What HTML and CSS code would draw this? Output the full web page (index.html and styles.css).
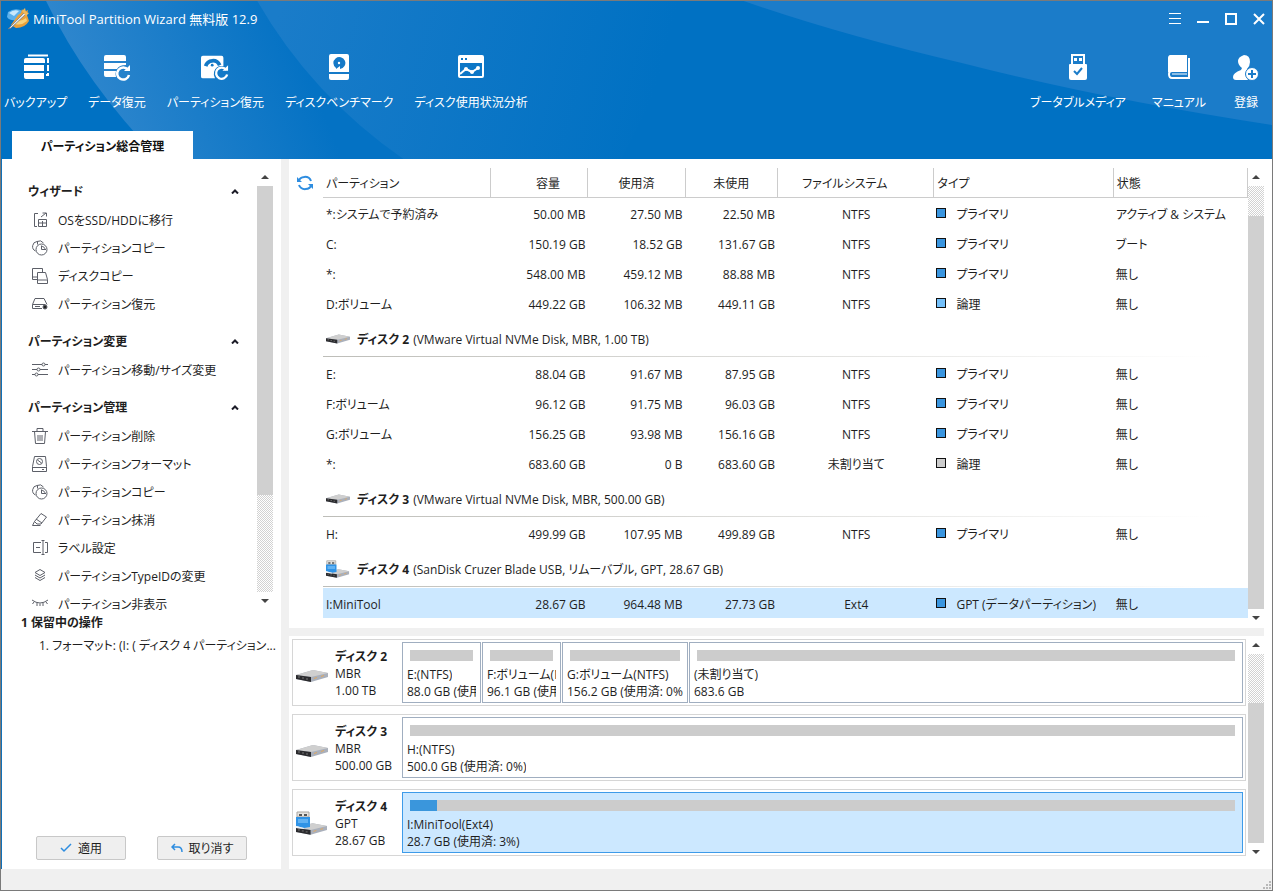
FILE: index.html
```html
<!DOCTYPE html>
<html lang="ja">
<head>
<meta charset="utf-8">
<meta name="viewport" content="width=device-width, initial-scale=1">
<title>MiniTool Partition Wizard 無料版 12.9</title>
<link rel="stylesheet" href="styles.css">
</head>
<body>
<svg class="defs" aria-hidden="true">
  <defs>
    <symbol id="disk" viewBox="0 0 32 12">
      <path d="M0 5 17 0 32 3 32 7 15 12 0 9z" fill="#aab0bb"/>
      <path d="M0 5 17 0 32 3 15 7z" fill="#cfcfcf"/>
      <path d="M0 5 15 7 15 12 0 9z" fill="#2b2b2e"/>
      <path d="M2 7h2M6 8h2M10 9h2" stroke="#777" stroke-width="1"/>
      <path d="M18 8.500l3-1M25 6.500l3-1" stroke="#e0a860" stroke-width="1"/>
    </symbol>
    <symbol id="usb" viewBox="0 0 32 24">
      <use href="#disk" x="0" y="12" width="31" height="12"/>
      <path d="M1 1h12v5H1z" fill="#e6e4e0" stroke="#a9a5a0"/>
      <path d="M3 3h3v2H3zM8 3h3v2H8z" fill="#555"/>
      <path d="M0 6h14v10l-6 1-8-2z" fill="#2f93e6"/>
      <path d="M2 8h10v4H2z" fill="#62b2f2"/>
      <path d="M0 15 8 17v1l-8-1z" fill="#eef3f8"/>
    </symbol>
    <symbol id="pie" viewBox="0 0 16 16">
      <circle cx="9.500" cy="9.500" r="5.500"/><path d="M3.500 11A5 5 0 0 1 5 1.500q4-2 6.500 1.500M5.500 1.500v3M9.500 5.500v4H14M9.500 6.500a3 3 0 0 1 3.500 3"/>
    </symbol>
    <symbol id="up" viewBox="0 0 8 4"><path d="M0 4 4 0 8 4z" fill="#444"/></symbol>
    <symbol id="down" viewBox="0 0 8 4"><path d="M0 0h8L4 4z" fill="#444"/></symbol>
    <symbol id="chev" viewBox="0 0 8 5"><path d="M1 4.500 4 1.500 7 4.500" fill="none" stroke="#1c1c28" stroke-width="2"/></symbol>
  </defs>
</svg>
<div class="window">
  <header class="header">
    <svg class="backdrop" viewBox="0 0 1270 158" preserveAspectRatio="none" aria-hidden="true">
      <defs>
        <linearGradient id="beam1" gradientUnits="userSpaceOnUse" x1="70" y1="60" x2="270" y2="-20"><stop offset="0" stop-color="#2e86cd"/><stop offset="1" stop-color="#0472c4"/></linearGradient>
        <linearGradient id="beam2" gradientUnits="userSpaceOnUse" x1="270" y1="40" x2="640" y2="140"><stop offset="0" stop-color="#1a7cc9"/><stop offset="1" stop-color="#0071c3"/></linearGradient>
      </defs>
      <path d="M45 0H256Q310 94 402 158H158Q84 82 45 0z" fill="url(#beam1)"/>
      <path d="M256 0H700L620 158H402Q310 94 256 0z" fill="url(#beam2)"/>
      <path d="M742 0Q840 34 960 62 1100 98 1270 124V0z" fill="#1b7cc9"/>
    </svg>
    <div class="titlebar">
      <svg class="logo" viewBox="0 0 22 22" aria-hidden="true">
        <path d="M1 4Q8-1 16 3L9 12Q3 13 0 9z" fill="#5cb1ec"/><path d="M2 5Q7 1 12 3L7 8z" fill="#c9e8fb"/>
        <path d="M11 7 14 5 15 1l2 3 4-2-1 5 2 6q-4 7-13 7l-5-3z" fill="#e9a13b"/><path d="M9 12q5 2 10-2l1 3q-6 5-12 3z" fill="#f8d27a"/>
        <path d="M1 21 17 5l2 1L4 20z" fill="#e9edf2" stroke="#6a7480" stroke-width=".7"/><path d="m15 3 3-3 1 4 3 1-3 3z" fill="#f0b95a"/>
      </svg>
      <h1 class="title">MiniTool Partition Wizard 無料版 12.9</h1>
      <div class="controls">
        <button aria-label="メニュー"><svg viewBox="0 0 12 12"><path d="M0 .5h12M0 5.500h12M0 10.500h12" stroke="#fff" fill="none"/></svg></button>
        <button aria-label="最小化"><svg viewBox="0 0 12 12"><path d="M0 9h12" stroke="#fff" stroke-width="2"/></svg></button>
        <button aria-label="最大化"><svg viewBox="0 0 12 12"><path d="M1 1h10v10H1z" stroke="#fff" stroke-width="2" fill="none"/></svg></button>
        <button aria-label="閉じる"><svg viewBox="0 0 12 12"><path d="m1 1 10 10M11 1 1 11" stroke="#fff" stroke-width="2"/></svg></button>
      </div>
    </div>
    <nav class="toolbar">
      <div class="tools">
      <button class="tool"><svg viewBox="0 0 26 28"><path d="M5 1.500h20M25 4v5M25 11v6M25 19v2h-2" fill="none" stroke="#fff" stroke-width="2"/><path d="M1 6q0-2 2-2h17q2 0 2 2v3H1zM1 11h20v6H1zM1 19h20v6H3q-2 0-2-2z" fill="#fff"/></svg><span>バックアップ</span></button>
      <button class="tool"><svg viewBox="0 0 26 28"><path d="M0 3q0-2 2-2h18q2 0 2 2v4H0zM0 9h22v2q-7 0-9 4H0zM0 17h12q-1 3 0 6H2q-2 0-2-2z" fill="#fff"/><path d="M24 16a6 6 0 1 0 1 5" fill="none" stroke="#fff" stroke-width="2.500"/><path d="M20 17h6v-6z" fill="#fff"/></svg><span>データ復元</span></button>
      <button class="tool"><svg viewBox="0 0 30 28"><path d="M0 3q0-2 2-2h20q2 0 2 2v9q-8-1-10 6-1 4 1 7H2q-2 0-2-2z" fill="#fff"/><path d="M5 12A8 8 0 0 1 20 11" fill="none" stroke="#1378c6" stroke-width="4"/><circle cx="12" cy="11" r="1.500" fill="#1378c6"/><path d="M27 16a6 6 0 1 0 1 5" fill="none" stroke="#fff" stroke-width="2.500"/><path d="M23 17h6v-6z" fill="#fff"/></svg><span>パーティション復元</span></button>
      <button class="tool"><svg viewBox="0 0 20 28"><path d="M0 2q0-2 2-2h16q2 0 2 2v16H0zM0 20h20v4q0 2-2 2H2q-2 0-2-2z" fill="#fff"/><path d="M7 14a6 6 0 1 1 4 1v-3l-4 3z" fill="#1579c7"/><circle cx="10" cy="9" r="1.200" fill="#fff"/></svg><span>ディスクベンチマーク</span></button>
      <button class="tool"><svg viewBox="0 0 26 28"><path fill-rule="evenodd" d="M2 1h22q2 0 2 2v19q0 2-2 2H2q-2 0-2-2V3q0-2 2-2zM2 9v13h22V9zM3 4v2h2V4zM7 4v2h2V4z" fill="#fff"/><path d="m2 20 6-5 6 3 6-4" fill="none" stroke="#fff" stroke-width="2"/><circle cx="8" cy="15" r="2" fill="#fff"/><circle cx="14" cy="18" r="2" fill="#fff"/><circle cx="20" cy="14" r="2" fill="#fff"/></svg><span>ディスク使用状況分析</span></button>
      </div>
      <div class="tools account">
      <button class="tool"><svg viewBox="0 0 20 28"><path d="M4 10V1h12v9" fill="none" stroke="#fff" stroke-width="2"/><path d="M6 4h3v3H6zM11 4h3v3h-3z" fill="#fff"/><path d="M1 11q0-1 1-1h16q1 0 1 1v13q0 2-2 2H3q-2 0-2-2z" fill="#fff"/><path d="m6 17 3 3 5-6" fill="none" stroke="#1b7cc9" stroke-width="2"/></svg><span>ブータブルメディア</span></button>
      <button class="tool"><svg viewBox="0 0 24 28"><path d="M4 1h16v16H4q-2 0-2 3V3q0-2 2-2z" fill="#fff"/><path d="M20 17H5q-3 0-3 3 0 4 3 4h17V4" fill="none" stroke="#fff" stroke-width="2"/><path d="M1 4q0-3 3-3h15v17H1z" fill="#fff"/><path d="M5 20h15" stroke="#fff"/></svg><span>マニュアル</span></button>
      <button class="tool"><svg viewBox="0 0 26 28"><path d="M11 1q6 0 6 7 0 4-3 7l1 2-2 4 2 5H3q-3 0-3-3 0-4 8-7l1-2Q5 11 5 7t6-6z" fill="#fff"/><circle cx="19" cy="20" r="6.500" fill="#fff" stroke="#1b7cc9"/><path d="M15 20h8M19 16v8" stroke="#1b7cc9" stroke-width="2"/></svg><span>登録</span></button>
      </div>
    </nav>
    <div class="tabs"><button class="tab">パーティション総合管理</button></div>
  </header>

  <main class="main">
    <aside class="sidebar">
      <div class="actions">
        <div class="groups">
          <section class="group">
            <button class="group-head">ウィザード<svg><use href="#chev"/></svg></button>
            <a href="#"><svg viewBox="0 0 16 16"><path d="M6 1.500H2.500v13H5M9 5l5-4M10.500 1h4v3.500M6.500 7.500h8v7h-8zM6.500 11h8M10.500 9v5"/></svg>OSをSSD/HDDに移行</a>
            <a href="#"><svg><use href="#pie"/></svg>パーティションコピー</a>
            <a href="#"><svg viewBox="0 0 16 16"><path d="M5 11.500H.5v-11h10V4M5.500 4.500h8l2 7v4h-10zM5.500 12h10M.5 9H5"/></svg>ディスクコピー</a>
            <a href="#"><svg viewBox="0 0 16 16"><path d="M.5 8.500 3 2.500h9l3 6M.5 8.500h13M.5 8.500v4H10M3 10.500h5"/><circle cx="13" cy="11" r="2" fill="#222"/></svg>パーティション復元</a>
          </section>
          <section class="group">
            <button class="group-head">パーティション変更<svg><use href="#chev"/></svg></button>
            <a href="#"><svg viewBox="0 0 16 16"><path d="M0 2.500h10M13 2.500h3M0 7.500h5M8 7.500h8M0 12.500h3M6 12.500h10"/><circle cx="11.500" cy="2.500" r="1.500"/><circle cx="6.500" cy="7.500" r="1.500"/><circle cx="4.500" cy="12.500" r="1.500"/></svg>パーティション移動/サイズ変更</a>
          </section>
          <section class="group">
            <button class="group-head">パーティション管理<svg><use href="#chev"/></svg></button>
            <a href="#"><svg viewBox="0 0 16 16"><path d="M0 3.500h16M5 3V.5h6V3M2.500 3.500l1 12h9l1-12M6 7v6M8 7v6M10 7v6"/></svg>パーティション削除</a>
            <a href="#"><svg viewBox="0 0 16 16"><path d="M2.500.5h11l1 10v5h-14v-5zM1 11.500h14M10 13.500h2"/><circle cx="7.500" cy="5.500" r="3"/><path d="m5.500 4 4 3"/></svg>パーティションフォーマット</a>
            <a href="#"><svg><use href="#pie"/></svg>パーティションコピー</a>
            <a href="#"><svg viewBox="0 0 16 16"><path d="M9 1.500 14.500 5 9 12H5L2.500 9.500zM4 7l6 4M2.500 9.500.5 13.500h8"/></svg>パーティション抹消</a>
            <a href="#"><svg viewBox="0 0 16 16"><path d="M9 2.500H1.500v10H9M13 2.500h2.500v10H13M9.500.5h3M11 .5v14M9.500 14.500h3M4 7.500h4"/></svg>ラベル設定</a>
            <a href="#"><svg viewBox="0 0 16 16"><path d="m8 1.500 5 3-5 3-5-3zM3 7l5 3 5-3M3 9.500l5 3 5-3"/></svg>パーティションTypeIDの変更</a>
            <a href="#"><svg viewBox="0 0 16 16"><path d="M0 4q8 6 16 0M2 6 .5 8M5 7v3M8 7.500V10M11 7v3M14 6l1.500 2"/></svg>パーティション非表示</a>
          </section>
        </div>
        <div class="scroll scroll-side"><button aria-label="上へ"><svg><use href="#up"/></svg></button><div class="track"><i class="thumb"></i></div><button aria-label="下へ"><svg><use href="#down"/></svg></button></div>
      </div>
      <section class="pending">
        <h2>1 保留中の操作</h2>
        <p class="operation">1. フォーマット: (I: ( ディスク 4 パーティション...</p>
        <div class="commit">
          <button><svg viewBox="0 0 12 10"><path d="m1 5 3 3 7-7"/></svg>適用</button>
          <button><svg viewBox="0 0 12 10"><path d="M4 1 1 4l3 3M1 4h6q4 0 4 5"/></svg>取り消す</button>
        </div>
      </section>
    </aside>

    <div class="content">
      <section class="list">
        <button class="refresh" aria-label="更新"><svg viewBox="0 0 16 16"><path d="M1.500 6.500A6.500 6 0 0 1 14 6M14.500 9.500A6.500 6 0 0 1 2 10" fill="none" stroke="#2e8de0" stroke-width="2"/><path d="M0 2v5h5zM16 14V9h-5z" fill="#2e8de0"/></svg></button>
        <div class="table-wrap">
        <table class="partitions">
          <colgroup><col class="c-name"><col class="c-num"><col class="c-num"><col class="c-free"><col class="c-fs"><col class="c-type"><col></colgroup>
          <thead><tr><th>パーティション</th><th class="cap">容量</th><th class="mid">使用済</th><th class="mid">未使用</th><th class="fsh">ファイルシステム</th><th>タイプ</th><th>状態</th></tr></thead>
          <tbody>
            <tr><td>*:システムで予約済み</td><td>50.00 MB</td><td>27.50 MB</td><td>22.50 MB</td><td>NTFS</td><td><i class="sw"></i>プライマリ</td><td>アクティブ &amp; システム</td></tr>
            <tr><td>C:</td><td>150.19 GB</td><td>18.52 GB</td><td>131.67 GB</td><td>NTFS</td><td><i class="sw"></i>プライマリ</td><td>ブート</td></tr>
            <tr><td>*:</td><td>548.00 MB</td><td>459.12 MB</td><td>88.88 MB</td><td>NTFS</td><td><i class="sw"></i>プライマリ</td><td>無し</td></tr>
            <tr><td>D:ボリューム</td><td>449.22 GB</td><td>106.32 MB</td><td>449.11 GB</td><td>NTFS</td><td><i class="sw logical"></i>論理</td><td>無し</td></tr>
            <tr class="disk-row"><th colspan="7"><div><svg><use href="#disk"/></svg><b>ディスク 2</b> (VMware Virtual NVMe Disk, MBR, 1.00 TB)</div></th></tr>
            <tr><td>E:</td><td>88.04 GB</td><td>91.67 MB</td><td>87.95 GB</td><td>NTFS</td><td><i class="sw"></i>プライマリ</td><td>無し</td></tr>
            <tr><td>F:ボリューム</td><td>96.12 GB</td><td>91.75 MB</td><td>96.03 GB</td><td>NTFS</td><td><i class="sw"></i>プライマリ</td><td>無し</td></tr>
            <tr><td>G:ボリューム</td><td>156.25 GB</td><td>93.98 MB</td><td>156.16 GB</td><td>NTFS</td><td><i class="sw"></i>プライマリ</td><td>無し</td></tr>
            <tr><td>*:</td><td>683.60 GB</td><td>0 B</td><td>683.60 GB</td><td>未割り当て</td><td><i class="sw free"></i>論理</td><td>無し</td></tr>
            <tr class="disk-row"><th colspan="7"><div><svg><use href="#disk"/></svg><b>ディスク 3</b> (VMware Virtual NVMe Disk, MBR, 500.00 GB)</div></th></tr>
            <tr><td>H:</td><td>499.99 GB</td><td>107.95 MB</td><td>499.89 GB</td><td>NTFS</td><td><i class="sw"></i>プライマリ</td><td>無し</td></tr>
            <tr class="disk-row"><th colspan="7"><div><svg><use href="#usb"/></svg><b>ディスク 4</b> (SanDisk Cruzer Blade USB, リムーバブル, GPT, 28.67 GB)</div></th></tr>
            <tr class="selected"><td>I:MiniTool</td><td>28.67 GB</td><td>964.48 MB</td><td>27.73 GB</td><td>Ext4</td><td><i class="sw"></i>GPT (データパーティション)</td><td>無し</td></tr>
          </tbody>
        </table>
        </div>
        <div class="scroll scroll-list"><button aria-label="上へ"><svg><use href="#up"/></svg></button><div class="track"><i class="thumb"></i></div><button aria-label="下へ"><svg><use href="#down"/></svg></button></div>
      </section>
      <section class="map">
        <div class="disks">
          <article class="disk">
            <svg class="disk-icon flat"><use href="#disk"/></svg>
            <div class="disk-info"><b>ディスク 2</b><span>MBR</span><span>1.00 TB</span></div>
            <div class="parts">
              <button class="part w79"><i class="bar"></i><span>E:(NTFS)</span><span>88.0 GB (使用済: 0%)</span></button>
              <button class="part w79"><i class="bar"></i><span>F:ボリューム(NTFS)</span><span>96.1 GB (使用済: 0%)</span></button>
              <button class="part w126"><i class="bar"></i><span>G:ボリューム(NTFS)</span><span>156.2 GB (使用済: 0%)</span></button>
              <button class="part w554"><i class="bar"></i><span>(未割り当て)</span><span>683.6 GB</span></button>
            </div>
          </article>
          <article class="disk">
            <svg class="disk-icon flat"><use href="#disk"/></svg>
            <div class="disk-info"><b>ディスク 3</b><span>MBR</span><span>500.00 GB</span></div>
            <div class="parts"><button class="part w554"><i class="bar"></i><span>H:(NTFS)</span><span>500.0 GB (使用済: 0%)</span></button></div>
          </article>
          <article class="disk">
            <svg class="disk-icon"><use href="#usb"/></svg>
            <div class="disk-info"><b>ディスク 4</b><span>GPT</span><span>28.67 GB</span></div>
            <div class="parts"><button class="part w554 active"><i class="bar"><i class="used" style="width:3.3%"></i></i><span>I:MiniTool(Ext4)</span><span>28.7 GB (使用済: 3%)</span></button></div>
          </article>
        </div>
        <div class="scroll scroll-map"><button aria-label="上へ"><svg><use href="#up"/></svg></button><div class="track"><i class="thumb"></i></div><button aria-label="下へ"><svg><use href="#down"/></svg></button></div>
      </section>
    </div>
  </main>
  <footer class="status"><svg viewBox="0 0 8 8"><path d="M6 0h2v2H6zM3 3h2v2H3zM6 3h2v2H6zM0 6h2v2H0zM3 6h2v2H3zM6 6h2v2H6z" fill="#b8b8b8"/></svg></footer>
</div>
</body>
</html>
```

FILE: styles.css
```css
* { box-sizing: border-box; }

body {
  margin: 0;
  font: 12px/17px "Open Sans", "Noto Sans CJK JP", sans-serif;
  font-feature-settings: "palt";
  color: #1e1e1e;
}

button {
  margin: 0;
  padding: 0;
  border: 0;
  background: none;
  font: inherit;
  font-feature-settings: inherit;
  color: inherit;
}

.defs { position: absolute; width: 0; height: 0; }

.window {
  display: flex;
  flex-direction: column;
  height: 100vh;
  border: 1px solid #7a7a7a;
  background: #fff;
}

/* Header */
.header {
  position: relative;
  display: flex;
  flex-direction: column;
  background: #0071c3;
  color: #fff;
}
.backdrop { position: absolute; inset: 0; width: 100%; height: 100%; }
.titlebar, .toolbar, .tabs { position: relative; display: flex; }
.titlebar { align-items: center; height: 36px; padding: 0 7px 0 6px; }
.logo { width: 22px; height: 22px; margin-right: 4px; }
.title { flex: 1; margin: 0; font-size: 13px; font-weight: 400; }
.controls { display: flex; gap: 16px; }
.controls button, .controls svg { display: block; width: 12px; height: 12px; }
.toolbar { justify-content: space-between; height: 94px; padding: 17px 12px 0 3px; }
.tools { display: flex; gap: 21px; align-items: flex-start; }
.tools.account { gap: 26px; }
.tool { display: flex; flex-direction: column; align-items: center; gap: 12px; white-space: nowrap; }
.tool svg { height: 28px; width: 28px; }
.tabs { padding-left: 11px; }
.tab { width: 181px; height: 28px; padding-top: 2px; background: #fff; color: #111; font-weight: 700; }

/* Main */
.main { flex: 1; min-height: 0; display: flex; border-left: 1px solid #1070b8; }
.sidebar { width: 279px; display: flex; flex-direction: column; }
.actions { flex: 9 1 0; min-height: 0; display: flex; padding: 9px 8px 0 26px; }
.groups { flex: 1; min-width: 0; overflow: hidden; padding-top: 8px; }
.group { display: flex; flex-direction: column; margin-bottom: 8px; }
.group-head {
  display: flex;
  justify-content: space-between;
  align-items: center;
  height: 30px;
  padding-right: 18px;
  font-weight: 700;
}
.group-head svg { width: 8px; height: 5px; }
.group a {
  display: flex;
  align-items: center;
  height: 28px;
  gap: 10px;
  padding-left: 4px;
  color: inherit;
  text-decoration: none;
  white-space: nowrap;
}
.group a svg { width: 16px; height: 16px; fill: none; stroke: #5c5f68; }
.pending { flex: 5 1 0; display: flex; flex-direction: column; padding: 4px 0 9px 19px; }
.pending h2 { margin: 0; font-size: 12px; line-height: 17px; }
.operation { margin: 6px 0 auto; padding-left: 18px; white-space: nowrap; }
.commit { display: flex; gap: 31px; padding-left: 15px; }
.commit button {
  display: flex;
  justify-content: center;
  align-items: center;
  gap: 6px;
  width: 90px;
  height: 24px;
  border: 1px solid #c8c8c8;
  border-radius: 2px;
  background: #efefef;
}
.commit svg { width: 12px; height: 10px; fill: none; stroke: #2e8de0; stroke-width: 1.5; }

/* Scrollbars */
.scroll { display: flex; flex-direction: column; flex: none; width: 16px; }
.scroll button { display: flex; justify-content: center; align-items: center; height: 18px; }
.scroll button svg { width: 8px; height: 4px; }
.track {
  flex: 1;
  display: flex;
  flex-direction: column;
  background: repeating-conic-gradient(#d2d2d2 0 25%, #fff 0 50%) 0 0 / 2px 2px;
}
.thumb { background: #d0d0d0; }
.scroll-side .thumb { height: 76%; }
.scroll-list .thumb { height: 93%; margin-top: auto; }
.scroll-map .thumb { height: 74%; margin-top: auto; }

/* Partition list */
.content { flex: 1; min-width: 0; display: flex; flex-direction: column; border-left: 8px solid #f0f0f0; padding-right: 8px; }
.list { display: flex; padding-top: 9px; padding-bottom: 1px; border-bottom: 8px solid #f0f0f0; }
.refresh { width: 34px; height: 30px; padding-left: 8px; }
.refresh svg { display: block; width: 16px; height: 16px; }
.table-wrap { flex: 1; min-width: 0; padding-bottom: 9px; }
.partitions { width: 100%; table-layout: fixed; border-collapse: separate; border-spacing: 0; }
.c-name { width: 18.200%; }
.c-num { width: 10.500%; }
.c-free { width: 10%; }
.c-fs { width: 16.900%; }
.c-type { width: 19.400%; }
.partitions thead th {
  height: 30px;
  padding: 2px 3px 0;
  border-right: 1px solid #ccc;
  border-bottom: 1px solid #ccc;
  font-weight: 400;
  text-align: left;
}
.partitions thead .cap { padding-left: 20px; text-align: center; }
.partitions thead .mid { padding-left: 3px; text-align: center; }
.partitions thead .fsh { padding-right: 25px; text-align: center; }
.partitions td { height: 30px; padding: 2px 3px 0; white-space: nowrap; }
.partitions td:nth-child(2), .partitions td:nth-child(3), .partitions td:nth-child(4) { text-align: right; }
.partitions td:nth-child(5) { text-align: center; }
.partitions td:nth-child(n + 6) { padding-left: 2px; }
.sw {
  display: inline-block;
  width: 10px;
  height: 10px;
  margin-right: 10px;
  border: 1px solid #111;
  background: #3a96e0;
  vertical-align: 1px;
}
.sw.logical { background: #74c0fa; }
.sw.free { background: #ccc; }
.disk-row th { height: 40px; padding: 0 3px; font-weight: 400; text-align: left; vertical-align: top; background: linear-gradient(90deg, #bdbdb8, #fff 96%) 0 38px / 100% 1px no-repeat; }
.disk-row div { display: flex; align-items: center; height: 40px; gap: 4px; padding-top: 2px; }
.disk-row svg { width: 24px; height: 18px; margin-right: 3px; }
.selected td { background: #cce8ff; }

/* Disk map */
.map { display: flex; flex: 1; min-height: 0; padding-bottom: 8px; }
.disks { flex: 1; min-width: 0; padding: 3px 2px 0 3px; display: flex; flex-direction: column; gap: 8px; }
.disk { display: flex; align-items: center; height: 67px; padding: 2px; border: 1px solid #d6d6d6; }
.disk-icon { flex: none; width: 32px; height: 24px; margin-left: 1px; }
.disk-icon.flat { height: 12px; margin-top: 6px; }
.disk-info { flex: none; display: flex; flex-direction: column; width: 74px; padding: 2px 0 0 7px; }
.parts { flex: 1; min-width: 0; display: flex; gap: 1px; }
.part {
  display: flex;
  flex-direction: column;
  align-items: flex-start;
  min-width: 0;
  height: 61px;
  padding: 7px 4px 0;
  border: 1px solid #a0aec0;
  text-align: left;
  white-space: nowrap;
}
.part span { max-width: 100%; overflow: hidden; }
.part .bar { align-self: stretch; height: 11px; margin: 0 3px 5px; background: #ccc; }
.used { display: block; height: 100%; background: #3a96dc; }
.w79 { flex: 79 1 79px; }
.w126 { flex: 126 1 126px; }
.w554 { flex: 554 1 554px; }
.part.active { border-color: #3d9be9; background: #cce8ff; }

.status { display: flex; justify-content: flex-end; align-items: flex-end; flex: none; height: 21px; padding: 1px; background: #f0f0f0; }
.status svg { width: 8px; height: 8px; }
```
